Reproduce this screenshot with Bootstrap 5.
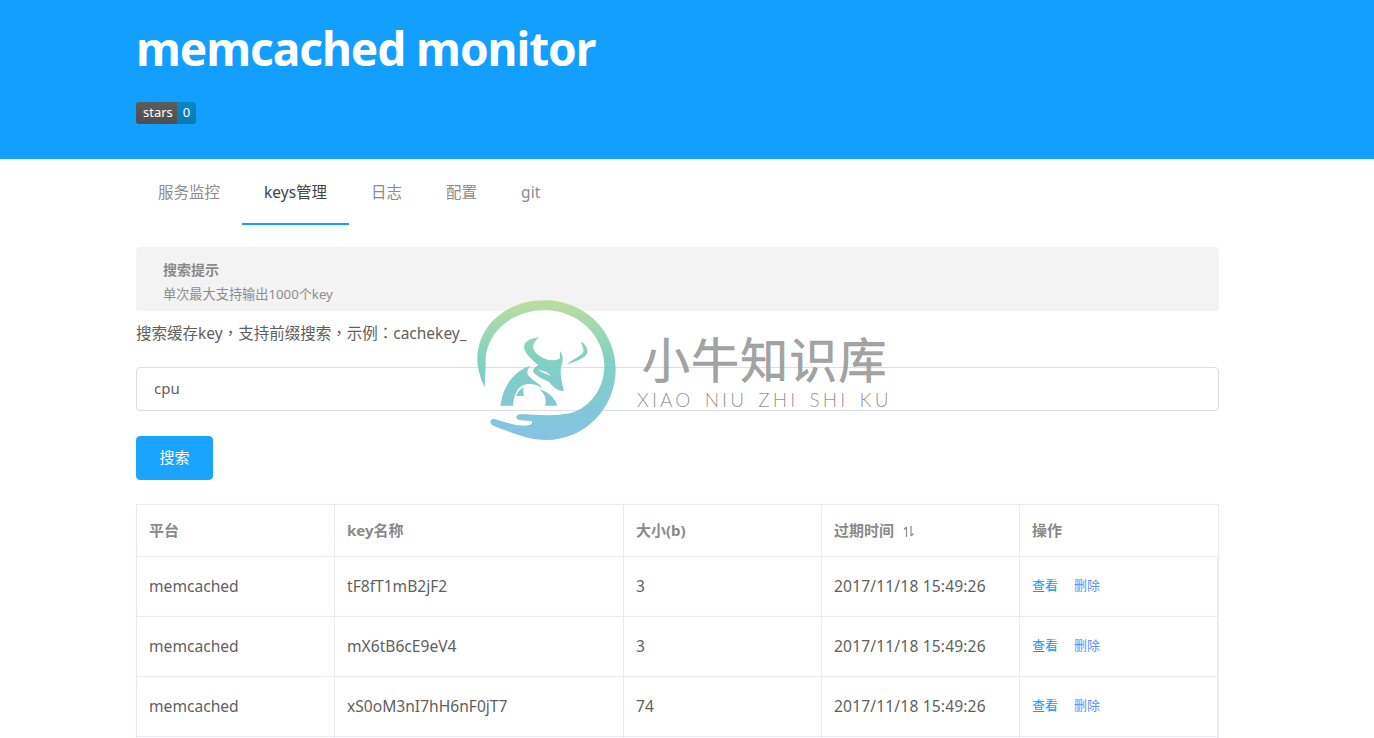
<!DOCTYPE html>
<html>
<head>
    <meta charset="utf-8">
    <title>memcached monitor</title>
    <link rel="stylesheet" href="https://cdn.jsdelivr.net/npm/bootstrap@5.3.0/dist/css/bootstrap.min.css">
    <style>
        body {
            font-family: "Noto Sans", "Noto Sans CJK SC", sans-serif;
            color: #5f5f5f;
            font-size: 15px;
        }
        .page-wrap {
            width: 1083px;
            margin-left: 136px;
        }
        .top-banner {
            background: #129fff;
            height: 159px;
            padding-top: 19px;
        }
        .top-banner h1 {
            font-family: "Noto Sans", "Noto Sans CJK SC", sans-serif;
            font-size: 46px;
            font-weight: 700;
            letter-spacing: -1.05px;
            line-height: 58px;
            margin: 0 0 25px;
            color: #fff;
        }
        .star-badge {
            width: fit-content;
            height: 22px;
            border-radius: 3px;
            overflow: hidden;
            font-size: 13px;
            line-height: 21px;
            color: #fff;
        }
        .star-badge span {
            padding: 0 4px 0 7px;
            background: linear-gradient(#5c5c5c, #4e4e4e);
        }
        .star-badge span + span {
            padding: 0 6px 0 6px;
            background: linear-gradient(#0a86c4, #0a78b0);
        }
        .main-tabs {
            height: 66px;
            margin-bottom: 22px;
        }
        .main-tabs .nav-link {
            height: 66px;
            padding: 21px 22px 0;
            font-size: 15.5px;
            line-height: 24px;
            color: #8c8c8c;
            border-bottom: 2px solid transparent;
        }
        .main-tabs .nav-link.active {
            color: #444;
            border-bottom-color: #129fff;
        }
        .tip-box {
            background: #f3f3f3;
            border: 0;
            border-radius: 4px;
            height: 64px;
            margin-bottom: 9px;
            padding: 11px 27px 0;
            color: #8c8c8c;
            font-size: 13.2px;
            line-height: 24px;
        }
        .tip-box strong {
            display: block;
            font-size: 14px;
            font-weight: 700;
            color: #8a8a8a;
        }
        .search-label {
            font-size: 15.5px;
            line-height: 24px;
            margin-bottom: 22px;
        }
        .mid-punct {
            font-family: "Noto Sans CJK TC", sans-serif;
        }
        .key-input.form-control {
            height: 44px;
            padding: 0 17px 3px;
            font-size: 15px;
            color: #5f5f5f;
            border-color: #dcdee2;
            border-radius: 4px;
            margin-bottom: 25px;
        }
        .search-btn.btn {
            width: 77px;
            height: 44px;
            padding: 0 0 2px;
            font-size: 15px;
            color: #fff;
            background: #19a4ff;
            border-color: #19a4ff;
            border-radius: 4px;
            margin-bottom: 24px;
        }
        .key-table.table {
            --bs-table-border-color: #e9eaf5;
            --bs-table-color: #5f5f5f;
            table-layout: fixed;
            width: 1082px;
            margin: 0;
        }
        .key-table th {
            height: 52px;
            padding: 0 12px 1px;
            vertical-align: middle;
            font-size: 15px;
            font-weight: 700;
            color: #8a8a8a;
        }
        .key-table td {
            height: 60px;
            padding: 0 12px;
            vertical-align: middle;
            font-size: 15.6px;
        }
        .key-table tbody td:last-child {
            box-shadow: inset -1px 0 #e9eaf5;
            padding-bottom: 3px;
        }
        .key-table .date-cell {
            letter-spacing: .15px;
        }
        .key-table td a {
            font-size: 13px;
            text-decoration: none;
            color: #0a9cff;
            margin-right: 12px;
        }
        .key-table td a + a {
            color: #6a8cff;
        }
        .sort-mark {
            margin-left: 5px;
            vertical-align: -1px;
        }
        .brand-mark {
            position: absolute;
            left: 477px;
            top: 300px;
            pointer-events: none;
        }
        .brand-name {
            position: absolute;
            left: 642px;
            top: 332px;
            font-family: "Noto Sans CJK SC", sans-serif;
            font-size: 48px;
            line-height: 50px;
            letter-spacing: 1.1px;
            white-space: nowrap;
            color: rgba(150, 150, 150, .9);
            -webkit-text-stroke: .6px rgba(150, 150, 150, .9);
            pointer-events: none;
        }
        .brand-sub {
            position: absolute;
            left: 637px;
            top: 390px;
            font-family: "Lato", sans-serif;
            font-weight: 300;
            font-size: 19px;
            line-height: 20px;
            letter-spacing: 3.1px;
            word-spacing: 3px;
            white-space: nowrap;
            color: rgba(128, 128, 128, .85);
            pointer-events: none;
        }
    </style>
</head>
<body>
    <div class="top-banner">
        <div class="page-wrap">
            <h1>memcached monitor</h1>
            <div class="star-badge d-flex"><span>stars</span><span>0</span></div>
        </div>
    </div>

    <div class="page-wrap">
        <ul class="nav main-tabs">
            <li class="nav-item"><a class="nav-link" href="#">服务监控</a></li>
            <li class="nav-item"><a class="nav-link active" href="#">keys管理</a></li>
            <li class="nav-item"><a class="nav-link" href="#">日志</a></li>
            <li class="nav-item"><a class="nav-link" href="#">配置</a></li>
            <li class="nav-item"><a class="nav-link" href="#">git</a></li>
        </ul>

        <div class="alert tip-box">
            <strong>搜索提示</strong>
            单次最大支持输出1000个key
        </div>

        <p class="search-label">搜索缓存key<span class="mid-punct">，</span>支持前缀搜索<span class="mid-punct">，</span>示例<span class="mid-punct">：</span>cachekey_</p>
        <input class="form-control key-input" type="text" value="cpu">
        <button class="btn search-btn d-block" type="button">搜索</button>

        <table class="table table-bordered key-table">
            <colgroup>
                <col width="198"><col width="289"><col width="198"><col width="198"><col width="199">
            </colgroup>
            <thead>
                <tr>
                    <th>平台</th>
                    <th>key名称</th>
                    <th>大小(b)</th>
                    <th>过期时间
                        <svg class="sort-mark" width="12" height="11" viewBox="0 0 12 11" fill="none" stroke="#8a8a8a" stroke-width="1.2">
                            <path d="M3.5 11V1M3.5 1L1 3.5M8 0V10M8 10L10.5 7.5"/>
                        </svg>
                    </th>
                    <th>操作</th>
                </tr>
            </thead>
            <tbody>
                <tr>
                    <td>memcached</td><td>tF8fT1mB2jF2</td><td>3</td><td class="date-cell">2017/11/18 15:49:26</td>
                    <td><a href="#">查看</a> <a href="#">删除</a></td>
                </tr>
                <tr>
                    <td>memcached</td><td>mX6tB6cE9eV4</td><td>3</td><td class="date-cell">2017/11/18 15:49:26</td>
                    <td><a href="#">查看</a> <a href="#">删除</a></td>
                </tr>
                <tr>
                    <td>memcached</td><td>xS0oM3nI7hH6nF0jT7</td><td>74</td><td class="date-cell">2017/11/18 15:49:26</td>
                    <td><a href="#">查看</a> <a href="#">删除</a></td>
                </tr>
                <tr>
                    <td></td><td></td><td></td><td></td><td></td>
                </tr>
            </tbody>
        </table>
    </div>

    <!-- watermark -->
    <svg class="brand-mark" width="140" height="142" viewBox="21 15 420 426">
        <defs>
            <linearGradient id="wmGrad" gradientUnits="userSpaceOnUse" x1="0" y1="16" x2="0" y2="435">
                <stop offset="0" stop-color="#bbdc9b"/>
                <stop offset=".42" stop-color="#7bcfc0"/>
                <stop offset="1" stop-color="#7fbfe2"/>
            </linearGradient>
        </defs>
        <g fill="url(#wmGrad)" opacity=".95">
            <path d="M44 277C28 245 22 215 22 190C24 90 110 16 225 16C345 16 437 110 437 222C437 340 345 435 228 435C170 435 120 410 70 392C58 386 58 374 70 371C95 376 125 392 165 392C180 392 190 386 185 378L150 376C135 372 135 360 150 358C190 358 250 365 300 355C355 340 403 285 403 212C403 120 320 45 225 45C130 45 47 110 47 200C47 225 45 250 44 277Z"/>
            <path d="M208 127C178 130 158 142 163 162C168 180 190 198 205 210C195 215 188 222 190 232C200 245 225 255 238 262C248 275 265 290 282 288C275 260 268 230 275 210C280 195 280 180 270 168C268 178 272 185 268 192C245 200 225 195 205 180C190 168 178 150 208 127Z"/>
            <path d="M333 140C345 145 358 165 350 178C340 192 310 202 290 208C305 195 325 188 338 175C345 165 335 152 333 140Z"/>
            <path d="M182 212C132 228 100 270 91 332L130 332C130 305 140 280 160 270C180 264 200 268 218 280C205 262 175 250 172 235C172 225 176 218 182 212Z"/>
            <path d="M160 277C150 284 142 292 138 303L162 303C160 292 160 285 160 277Z"/>
            <path d="M208 283C235 290 255 310 262 332L225 332C232 315 225 298 208 283Z"/>
        </g>
        <path d="M205 226C220 226 235 233 243 243C230 238 215 232 205 226Z" fill="#fff"/>
    </svg>
    <div class="brand-name">小牛知识库</div>
    <div class="brand-sub">XIAO NIU ZHI SHI KU</div>

    <script src="https://cdn.jsdelivr.net/npm/bootstrap@5.3.0/dist/js/bootstrap.bundle.min.js"></script>
</body>
</html>
